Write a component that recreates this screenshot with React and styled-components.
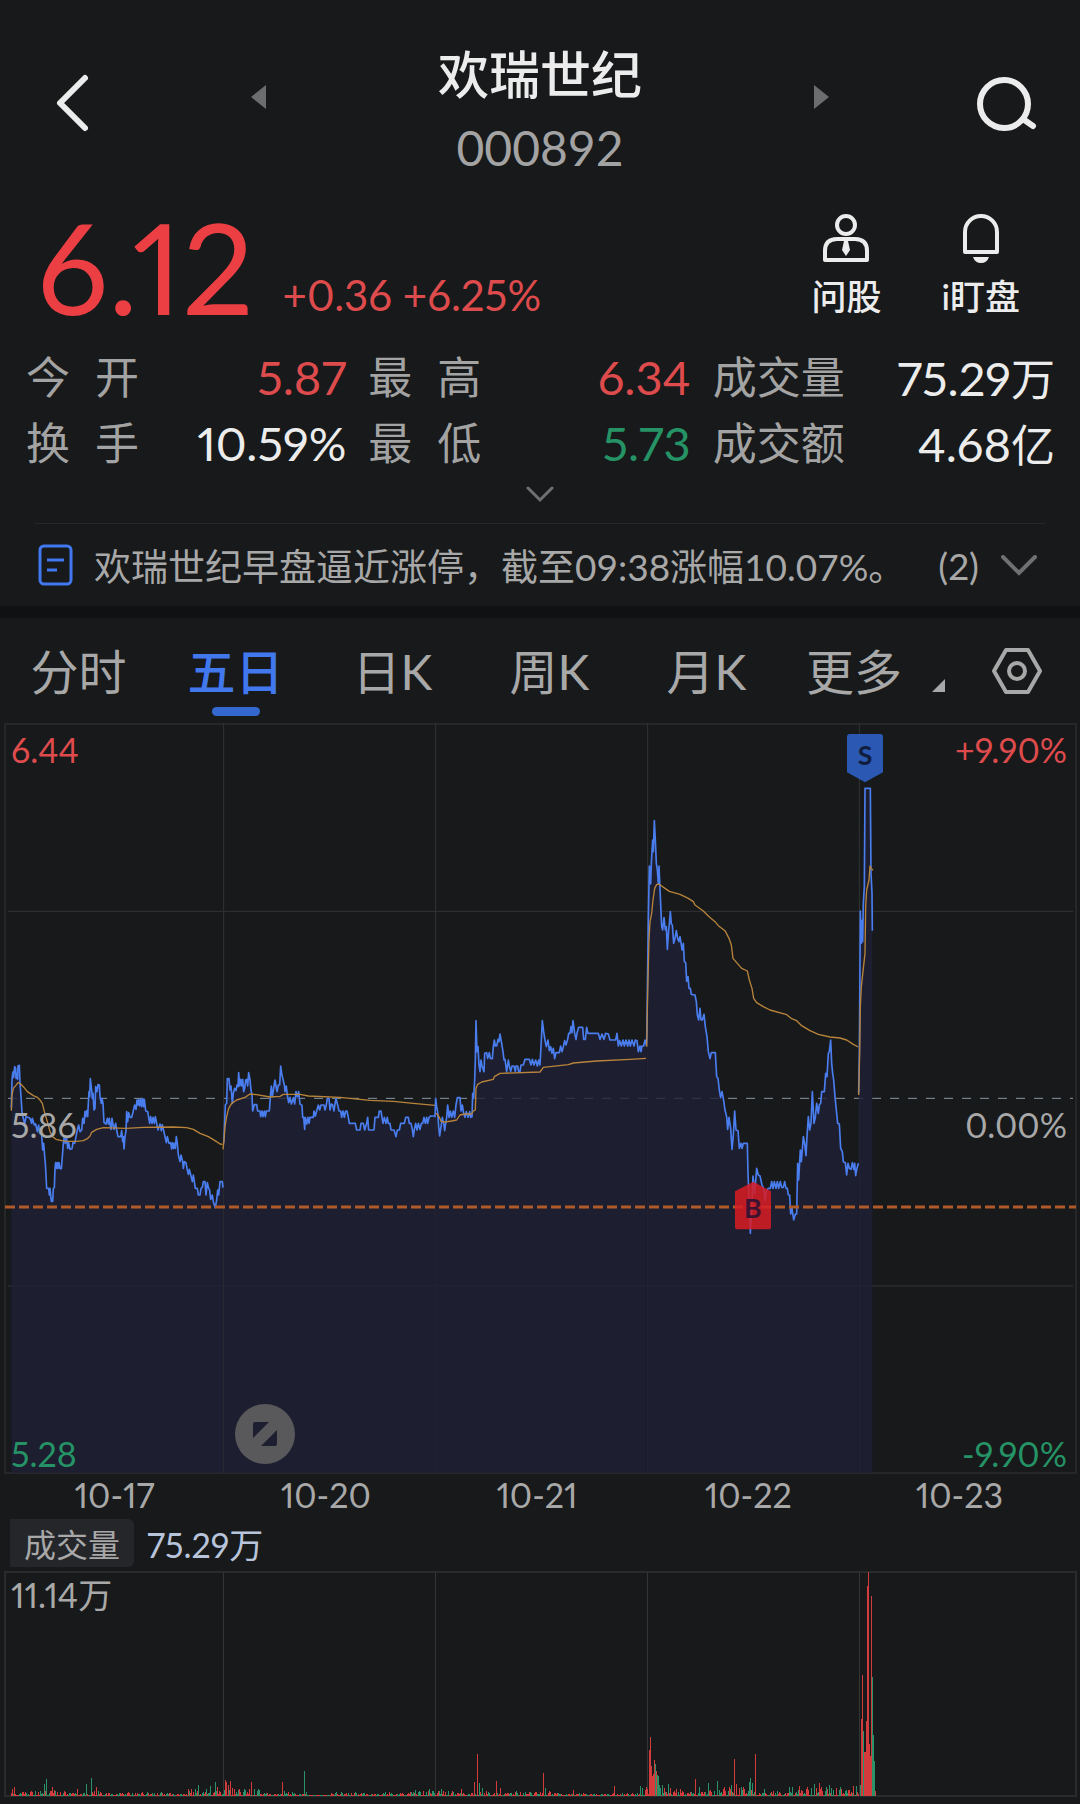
import React, { useState } from "react";
import styled, { createGlobalStyle } from "styled-components";

const RED = "#eb3f44";
const SOFT_RED = "#de4b4d";
const GREEN = "#259365";
const BLUE = "#4278ee";

const GlobalStyle = createGlobalStyle`
  * {
    box-sizing: border-box;
  }
  body {
    margin: 0;
    background: #17191a;
    color: #ececec;
    font-family: Lato, "Noto Sans CJK SC", sans-serif;
    font-feature-settings: "pnum";
  }
  button {
    padding: 0;
    border: none;
    background: none;
    color: inherit;
    font: inherit;
    font-feature-settings: inherit;
    cursor: pointer;
  }
  svg {
    display: block;
  }
`;

const Main = styled.main`
  width: 100%;
  overflow: hidden;
`;

const Header = styled.header`
  display: flex;
  justify-content: space-between;
  align-items: center;
  padding: 25px 42px 0;
`;

const IconButton = styled.button`
  width: 66px;
  height: 62px;
`;

const StockNav = styled.div`
  display: flex;
  justify-content: space-between;
  align-items: center;
  width: 58%;
`;

const ArrowButton = styled.button`
  width: 15px;
  margin-bottom: 14px;
`;

const TitleBlock = styled.div`
  padding-top: 12px;
  text-align: center;
`;

const StockName = styled.h1`
  margin: 0;
  font-size: 51px;
  font-weight: 500;
  line-height: 76px;
`;

const StockCode = styled.div`
  color: #a3a3a3;
  font-size: 48px;
  font-feature-settings: "tnum";
  line-height: 70px;
`;

const PriceSection = styled.section`
  display: flex;
  justify-content: space-between;
  align-items: flex-start;
  padding: 24px 60px 0 37px;
`;

const PriceGroup = styled.div`
  display: flex;
  align-items: flex-end;
  gap: 29px;
`;

const Price = styled.div`
  color: ${RED};
  font-size: 126px;
  line-height: 120px;
`;

const Change = styled.div`
  color: ${SOFT_RED};
  font-size: 42px;
  line-height: 64px;
`;

const Tools = styled.div`
  display: flex;
  gap: 60px;
  padding-top: 7px;
`;

const ToolButton = styled.button`
  display: flex;
  flex-direction: column;
  align-items: center;
  gap: 10px;
  font-size: 35px;
  font-weight: 500;
  line-height: 44px;
`;

const StatGrid = styled.dl`
  display: grid;
  grid-template-columns: 320fr 322fr 342fr;
  column-gap: 22px;
  margin: 17px 25px 0 26px;
`;

const Stat = styled.div`
  display: flex;
  justify-content: space-between;
  align-items: center;
  height: 66px;
`;

const StatLabel = styled.dt`
  display: flex;
  gap: ${(props) => (props.$spread ? "25px" : "0")};
  padding-bottom: 5px;
  color: #a3a3a3;
  font-size: 44px;
`;

const StatValue = styled.dd`
  margin: 0;
  color: ${(props) => props.$color || "#ececec"};
  font-size: 47px;
`;

const Unit = styled.span`
  font-size: 44px;
`;

const ExpandButton = styled.button`
  display: flex;
  justify-content: center;
  align-items: center;
  width: 100%;
  height: 47px;
  padding-bottom: 11px;
`;

const News = styled.section`
  display: flex;
  align-items: center;
  height: 83px;
  margin: 0 35px;
  border-top: 1px solid #26282a;
  color: #a8a8a8;
  font-size: 37px;
`;

const NewsLink = styled.a`
  display: flex;
  flex: 1;
  align-items: center;
  gap: 21px;
  padding-left: 2px;
  color: inherit;
  font-feature-settings: "tnum";
  text-decoration: none;
  white-space: nowrap;
`;

const NewsMore = styled.button`
  display: flex;
  align-items: center;
  gap: 22px;
  padding-right: 8px;
`;

const Band = styled.div`
  height: 12px;
  background: #101113;
`;

const TabBar = styled.nav`
  display: grid;
  grid-template-columns: repeat(5, 157fr) 295fr;
  height: 102px;
  padding-top: 19px;
  color: #a8a8a8;
  font-size: 48px;
  line-height: 70px;
`;

const Tab = styled.button`
  display: flex;
  flex-direction: column;
  align-items: center;
  color: ${(props) => (props.$active ? BLUE : "inherit")};
  font-weight: ${(props) => (props.$active ? 500 : 400)};

  &::after {
    content: "";
    width: 48px;
    height: 9px;
    border-radius: 5px;
    background: ${(props) => (props.$active ? "#3268cf" : "transparent")};
  }
`;

const TabExtras = styled.div`
  display: flex;
  justify-content: space-between;
  align-items: flex-start;
  padding: 0 37px 0 21px;
`;

const MoreButton = styled.button`
  display: flex;
  align-items: flex-end;
  gap: 30px;

  svg {
    margin-bottom: 15px;
  }
`;

const SettingsButton = styled.button`
  padding-top: 9px;
`;

const ChartPanel = styled.section`
  position: relative;

  > svg {
    width: 100%;
    height: auto;
  }
`;

const AxisLabel = styled.span`
  position: absolute;
  color: ${(props) => props.$color || "#a8a8a8"};
  font-size: 34px;
  line-height: 40px;
  ${(props) => (props.$right ? "right: 13px;" : "left: 11px;")}
  top: ${(props) => props.$top};
`;

const FullscreenButton = styled.button`
  position: absolute;
  left: 21.75%;
  bottom: 10px;
  width: 60px;
  height: 60px;
`;

const Dates = styled.div`
  display: grid;
  grid-template-columns: repeat(5, 1fr);
  padding: 0 15px 0 9px;
  color: #a8a8a8;
  font-size: 34px;
  line-height: 42px;
  text-align: center;
`;

const VolumeHead = styled.div`
  display: flex;
  align-items: center;
  gap: 13px;
  height: 54px;
  padding-left: 10px;
  color: #b8c4da;
  font-size: 34px;
`;

const VolumeChip = styled.button`
  height: 48px;
  padding: 0 14px;
  border-radius: 0 6px 6px 0;
  background: #25262a;
  color: #a8a8a8;
  font-size: 32px;
`;

const stats = [
  { label: "今开", value: "5.87", color: SOFT_RED },
  { label: "最高", value: "6.34", color: SOFT_RED },
  { label: "成交量", value: "75.29", unit: "万" },
  { label: "换手", value: "10.59%" },
  { label: "最低", value: "5.73", color: GREEN },
  { label: "成交额", value: "4.68", unit: "亿" },
];

const tabs = ["分时", "五日", "日K", "周K", "月K"];
const dates = ["10-17", "10-20", "10-21", "10-22", "10-23"];

// One entry per trading day: origin of the day, minute prices and average line
const days = [
  {
    x: 0,
    y: 0,
    price:
      "34,1165 36,1080 38,1060 40,1055 41,1072 44,1040 47,1045 48,1075 50,1060 53,1078 54,1038 58,1036 60,1090 63,1130 66,1175 70,1195 74,1212 78,1190 84,1192 90,1195 95,1210 97,1195 103,1215 107,1212 112,1235 116,1215 119,1240 122,1228 125,1245 128,1290 131,1270 134,1308 136,1330 138,1365 140,1405 146,1405 148,1425 150,1405 154,1444 158,1444 160,1405 163,1403 165,1345 167,1328 170,1345 172,1328 174,1345 177,1328 180,1346 184,1346 187,1310 190,1270 193,1250 196,1270 200,1255 203,1285 206,1268 210,1288 216,1286 219,1268 224,1270 228,1250 232,1230 236,1215 240,1235 245,1230 248,1195 252,1210 255,1175 257,1190 260,1172 263,1190 265,1150 267,1115 269,1130 271,1076 275,1110 277,1135 279,1120 282,1170 285,1165 287,1100 291,1115 294,1094 298,1095 300,1130 304,1150 306,1135 309,1150 312,1208 318,1212 322,1195 325,1212 328,1195 330,1212 333,1228 336,1195 339,1215 342,1228 347,1210 350,1230 354,1250 362,1250 365,1232 368,1265 370,1250 372,1287 375,1250 378,1232 380,1175 383,1205 386,1178 390,1192 395,1192 400,1172 404,1155 408,1168 411,1140 414,1155 416,1138 419,1158 422,1138 425,1160 428,1136 431,1160 433,1138 437,1172 443,1175 446,1192 449,1210 452,1190 456,1210 459,1192 463,1210 466,1190 470,1210 474,1230 480,1212 484,1232 487,1214 491,1232 495,1250 499,1268 502,1250 507,1270 512,1268 515,1287 518,1268 521,1285 524,1270 526,1285 529,1250 532,1270 535,1305 540,1325 543,1305 548,1325 550,1345 553,1325 558,1328 561,1345 565,1363 568,1348 573,1368 577,1385 580,1365 583,1385 586,1405 592,1405 595,1425 600,1425 603,1405 607,1402 610,1385 615,1385 618,1425 622,1388 626,1405 629,1410 632,1438 637,1425 640,1445 646,1463 650,1440 653,1410 656,1425 660,1385 667,1385 669,1403",
    average:
      "34,1172 36,1125 40,1105 47,1097 54,1088 60,1090 70,1100 82,1115 100,1127 112,1132 120,1140 127,1150 133,1175 142,1205 150,1235 158,1250 168,1258 185,1262 200,1264 230,1264 250,1262 262,1256 270,1248 275,1237 290,1228 310,1223 380,1225 430,1222 520,1221 560,1223 580,1228 600,1240 625,1250 645,1262 660,1272 668,1273",
  },
  {
    x: 660,
    y: 780,
    price:
      "11,490 13,450 16,375 20,370 22,296 27,296 30,330 33,318 37,370 40,340 44,325 48,332 51,315 54,320 56,278 59,318 62,298 65,318 68,298 71,335 74,325 77,300 80,298 83,318 86,278 90,300 93,330 96,345 98,393 103,374 110,374 113,393 120,393 122,410 126,393 129,410 133,393 136,410 139,393 148,393 151,350 154,318 157,350 161,325 165,300 168,318 171,335 175,315 179,315 182,258 185,280 189,298 193,315 195,335 199,318 202,345 206,368 210,352 214,372 220,353 224,372 228,335 232,350 236,335 240,372 246,376 248,412 251,412 254,448 256,412 260,432 264,412 267,430 270,412 280,412 282,393 286,408 290,393 295,375 299,390 303,375 312,375 315,390 319,375 322,355 327,355 330,390 334,372 338,375 342,393 345,372 348,355 353,375 357,393 362,393 365,412 369,393 373,412 377,393 381,393 385,412 388,430 406,430 410,450 420,450 423,430 430,430 434,450 440,430 443,412 446,450 462,450 465,412 475,412 478,393 483,393 486,412 489,430 493,412 498,430 502,412 505,430 510,430 513,450 522,450 528,470 532,450 538,450 542,430 553,430 557,412 565,412 568,430 573,430 577,448 580,470 583,448 587,430 591,450 595,430 600,448 604,430 608,430 612,412 616,430 620,412 623,430 627,412 632,408 645,408",
    average:
      "9,508 12,480 15,440 20,410 26,385 35,370 50,360 75,352 90,342 110,344 150,351 180,349 190,343 240,343 265,348 360,352 450,361 520,364 580,370 645,376",
  },
  {
    x: 1290,
    y: 780,
    price:
      "15,412 17,355 20,380 23,395 26,440 29,468 33,440 37,412 41,430 44,452 47,430 50,412 53,375 57,412 61,393 65,412 70,393 74,412 78,375 82,353 90,353 93,393 97,375 101,400 105,412 109,395 114,412 119,395 122,412 126,410 128,340 131,355 134,300 136,240 138,122 141,215 144,200 147,255 150,275 153,240 156,258 162,275 164,220 170,218 173,235 178,218 181,235 187,236 190,200 193,180 196,198 200,198 204,178 207,185 210,162 215,190 219,215 222,240 225,238 230,275 235,240 238,258 242,275 246,258 252,258 256,275 258,258 263,258 266,275 270,275 273,255 280,255 285,238 298,238 303,255 307,238 312,255 317,240 322,258 326,240 330,255 334,180 337,122 341,155 345,180 349,200 354,180 358,212 362,200 366,220 370,205 374,236 378,218 388,218 392,198 396,215 400,200 404,182 408,195 413,178 416,160 420,160 423,140 426,158 429,122 434,160 438,178 441,160 446,142 458,142 461,178 466,178 470,142 474,160 505,160 510,178 516,162 522,178 527,160 535,162 540,180 557,180 561,160 565,198 569,182 574,198 579,180 583,198 588,180 593,198 597,180 601,198 606,180 612,198 616,180 621,182 625,215 630,198 633,215 636,198 641,198 645,180 650,198",
    average:
      "17,400 23,403 28,412 33,424 45,426 65,423 80,420 90,405 105,402 125,402 130,393 136,390 138,325 143,313 155,306 190,298 193,290 210,280 330,276 340,262 415,254 430,249 500,243 600,238 648,235",
  },
  {
    x: 1890,
    y: 180,
    price:
      "50,790 53,560 55,420 58,258 62,312 64,250 68,180 70,215 73,122 76,180 79,250 82,270 85,310 87,258 91,350 95,440 98,450 102,413 106,450 109,440 112,508 116,450 118,432 121,395 124,432 127,435 131,490 135,475 139,452 143,475 147,485 150,470 153,488 156,510 160,490 163,545 167,548 170,604 174,590 177,625 181,625 184,643 195,645 199,665 202,705 206,720 210,685 213,720 217,720 222,703 226,740 231,770 235,815 240,836 244,818 256,818 260,890 264,895 268,930 272,953 276,935 280,955 285,990 290,1010 293,1048 297,1012 302,1045 306,1108 310,1065 314,993 318,1050 324,1052 328,1105 333,1090 336,1105 340,1090 352,1090 354,1180 357,1250 361,1360 365,1290 369,1188 374,1240 380,1165 385,1185 390,1188 396,1215 401,1225 405,1262 410,1230 415,1225 421,1225 425,1205 429,1225 433,1205 438,1225 442,1205 446,1225 451,1205 455,1222 460,1222 464,1205 468,1225 472,1225 475,1245 479,1245 482,1302 486,1285 491,1320 496,1302 500,1302 503,1150 506,1200 511,1110 514,1145 520,1070 524,1090 528,1127 531,1070 535,1010 539,1050 543,1030 547,935 552,1030 556,1012 560,970 565,1000 568,975 572,970 575,935 583,935 587,880 591,890 595,820 598,815 602,780 605,850 608,880 611,900 615,950 619,990 623,1030 628,1032 632,1105 637,1115 640,1145 646,1148 650,1185 654,1150 658,1165 663,1168 667,1148 671,1168 674,1150 677,1187 681,1165 685,1150",
    average:
      "50,800 53,640 57,480 60,425 65,400 69,360 74,325 80,313 88,313 95,318 105,325 118,334 150,343 175,355 190,365 195,375 220,393 235,408 255,425 265,437 285,452 297,475 304,495 309,535 320,548 335,565 352,573 358,600 366,625 371,655 380,668 400,680 420,690 470,704 485,716 500,722 515,737 540,752 565,763 600,771 630,774 650,780 670,793 685,801",
  },
  {
    x: 2400,
    y: 0,
    price:
      "176,1120 178,1000 179,880 181,573 184,670 187,600 188,665 190,550 193,500 195,205 211,205 213,460 216,520 217,632",
    average:
      "176,1125 179,1000 181,860 184,800 190,745 195,700 197,560 200,510 207,480 210,438 214,445 219,451",
  },
];

const CHART_BOTTOM = 2259;

const areaPoints = (day) => {
  const points = day.price.split(" ");
  const first = points[0].split(",")[0];
  const last = points[points.length - 1].split(",")[0];
  const bottom = CHART_BOTTOM - day.y;
  return `${first},${bottom} ${day.price} ${last},${bottom}`;
};

// [x, height, rising]
const peaks = [
  [12, 7, 1], [14, 9, 1], [44, 12, 0], [46, 17, 0], [52, 9, 1], [54, 6, 1],
  [77, 7, 1], [86, 12, 0], [91, 18, 0], [96, 9, 1], [188, 7, 1], [198, 11, 0],
  [206, 7, 0], [210, 10, 0], [215, 14, 0], [217, 9, 1], [225, 16, 1],
  [226, 14, 1], [228, 11, 1], [230, 15, 1], [232, 8, 1], [251, 14, 1],
  [254, 7, 0], [282, 14, 1], [284, 5, 0], [304, 25, 0], [306, 4, 0],
  [415, 6, 0], [429, 7, 0], [441, 7, 0], [461, 7, 1], [474, 14, 1],
  [477, 42, 1], [479, 13, 0], [482, 8, 0], [496, 15, 1], [500, 8, 1],
  [543, 23, 1], [545, 8, 0], [573, 6, 1], [614, 10, 1], [640, 10, 0],
  [649, 46, 1], [650, 59, 1], [651, 30, 1], [652, 20, 1], [653, 22, 1],
  [654, 36, 1], [655, 32, 0], [656, 25, 1], [657, 21, 0], [658, 20, 0],
  [659, 11, 0], [660, 8, 0], [662, 11, 0], [664, 8, 1], [668, 12, 0],
  [670, 8, 1], [695, 17, 1], [699, 9, 0], [708, 13, 0], [717, 15, 0],
  [731, 11, 0], [734, 37, 1], [736, 12, 1], [741, 9, 0], [749, 14, 0],
  [750, 18, 0], [752, 13, 0], [755, 42, 1], [764, 7, 0], [789, 9, 0],
  [792, 9, 0], [799, 10, 1], [814, 12, 0], [819, 13, 1], [829, 11, 0],
  [853, 10, 1], [856, 10, 0], [860, 11, 0], [861, 77, 1], [862, 121, 1],
  [863, 65, 0], [864, 44, 1], [865, 44, 1], [866, 75, 1], [867, 210, 1],
  [868, 224, 1], [869, 52, 1], [870, 40, 1], [871, 200, 1], [872, 119, 0],
  [873, 61, 0], [874, 35, 0], [875, 5, 1],
];

// [until x, usual height]
const activity = [
  [60, 5], [110, 4], [185, 3], [222, 7], [262, 7], [310, 3], [330, 0],
  [400, 3], [450, 5], [510, 4], [560, 4], [640, 2], [660, 9], [720, 6],
  [760, 9], [790, 4], [859, 9],
];

const quietBars = [];
for (let x = 11; x < 859; x += 1) {
  const level = activity.find((item) => x < item[0])[1];
  const noise = ((x * 7919 + x * x * 31) % 97) / 97;
  quietBars.push([x, 1 + Math.round(level * noise * noise), (x * 13) % 7 > 2]);
}
const bars = [...quietBars, ...peaks];

const Chevron = ({ width, height, stroke }) => (
  <svg width={width} height={height} viewBox={`0 0 ${width} ${height}`}>
    <path
      d={`M2 2 L${width / 2} ${height - 3} L${width - 2} 2`}
      fill="none"
      stroke="#6f7072"
      strokeWidth={stroke}
      strokeLinecap="round"
    />
  </svg>
);

const PriceChart = () => (
  <svg viewBox="0 0 3240 2262" role="img" aria-label="五日">
    <g fill="none" stroke="#323436" strokeWidth="3">
      <rect x="15" y="12" width="3213" height="2247" stroke="#292b2d" strokeWidth="5" />
      <path d="M24 574H3219M24 1698H3219M671 12V2259M1307 12V2259M1943 12V2259M2578 12V2259" />
      <path d="M24 1135H3219" stroke="#8896a3" strokeDasharray="27 27" strokeDashoffset="-0" />
    </g>
    {days.map((day) => (
      <polygon
        key={day.x}
        transform={`translate(${day.x} ${day.y})`}
        points={areaPoints(day)}
        fill="#1f1f35"
        fillOpacity="0.8"
      />
    ))}
    {days.map((day) => (
      <g
        key={day.x}
        transform={`translate(${day.x} ${day.y})`}
        fill="none"
        strokeLinejoin="round"
      >
        <polyline points={day.price} stroke="#4a7dee" strokeWidth="5" />
        <polyline points={day.average} stroke="#b8843c" strokeWidth="4" />
      </g>
    ))}
    <path d="M15 1461H3228" stroke="#b05a2a" strokeWidth="9" strokeDasharray="30 12" />
    <path d="M2205 1414 L2260 1385 L2313 1414 V1520 Q2313 1528 2305 1528 H2213 Q2205 1528 2205 1520Z" fill="#d71c24" fillOpacity="0.86" />
    <path d="M2541 50 Q2541 42 2549 42 H2641 Q2649 42 2649 50 V157 L2595 187 L2541 157Z" fill="#2c5cbb" fillOpacity="0.95" />
    <g fontSize="80" fontWeight="700" textAnchor="middle">
      <text x="2258" y="1494" fill="#3b1330">B</text>
      <text x="2595" y="136" fill="#111d3c">S</text>
    </g>
  </svg>
);

const VolumeChart = () => (
  <svg viewBox="0 0 1080 234" role="img" aria-label="成交量">
    <g fill="none" stroke="#323436">
      <rect x="5" y="2" width="1071" height="224" stroke="#292b2d" strokeWidth="2" />
      <path d="M223.5 2V226M435.5 2V226M647.5 2V226M859.5 2V226" />
    </g>
    {bars.map(([x, height, rising], i) => (
      <rect
        key={i}
        x={x}
        y={226 - height}
        width="1"
        height={height}
        fill={rising ? "#d33b3d" : "#2a9168"}
      />
    ))}
  </svg>
);

const App = () => {
  const [tab, setTab] = useState("五日");

  return (
    <Main>
      <GlobalStyle />
      <Header>
        <IconButton aria-label="返回">
          <svg width="66" height="62" viewBox="0 0 66 62">
            <path
              d="M43 5 L18 30 L43 55"
              fill="none"
              stroke="#ececec"
              strokeWidth="6"
              strokeLinecap="round"
              strokeLinejoin="round"
            />
          </svg>
        </IconButton>
        <StockNav>
          <ArrowButton aria-label="上一只">
            <svg width="15" height="24" viewBox="0 0 15 24">
              <path d="M15 0V24L0 12Z" fill="#6c6d6e" />
            </svg>
          </ArrowButton>
          <TitleBlock>
            <StockName>欢瑞世纪</StockName>
            <StockCode>000892</StockCode>
          </TitleBlock>
          <ArrowButton aria-label="下一只">
            <svg width="15" height="24" viewBox="0 0 15 24">
              <path d="M0 0V24L15 12Z" fill="#6c6d6e" />
            </svg>
          </ArrowButton>
        </StockNav>
        <IconButton aria-label="搜索">
          <svg width="66" height="62" viewBox="0 0 66 62">
            <g fill="none" stroke="#ececec" strokeWidth="6">
              <circle cx="32" cy="31" r="24" />
              <path d="M51 46 L61 53" strokeLinecap="round" />
            </g>
          </svg>
        </IconButton>
      </Header>

      <PriceSection>
        <PriceGroup>
          <Price>6.12</Price>
          <Change>+0.36 +6.25%</Change>
        </PriceGroup>
        <Tools>
          <ToolButton>
            <svg width="46" height="50" viewBox="0 0 46 50">
              <g fill="none" stroke="#ececec" strokeWidth="4">
                <circle cx="23" cy="11" r="9" />
                <path d="M2 46V37Q2 25 14 25H32Q44 25 44 37V46Z" strokeLinejoin="round" />
              </g>
              <path d="M21 27H25L27 36L23 42L19 36Z" fill="#ececec" />
            </svg>
            问股
          </ToolButton>
          <ToolButton>
            <svg width="36" height="50" viewBox="0 0 36 50">
              <path
                d="M2 38V18A16 16 0 0 1 34 18V38Z"
                fill="none"
                stroke="#ececec"
                strokeWidth="4"
                strokeLinejoin="round"
              />
              <path d="M10 43H26Q24 49 18 49Q12 49 10 43Z" fill="#ececec" />
            </svg>
            i盯盘
          </ToolButton>
        </Tools>
      </PriceSection>

      <StatGrid>
        {stats.map((stat) => (
          <Stat key={stat.label}>
            <StatLabel $spread={stat.label.length === 2}>
              {stat.label.split("").map((char) => (
                <span key={char}>{char}</span>
              ))}
            </StatLabel>
            <StatValue $color={stat.color}>
              {stat.value}
              {stat.unit && <Unit>{stat.unit}</Unit>}
            </StatValue>
          </Stat>
        ))}
      </StatGrid>

      <ExpandButton aria-label="展开">
        <Chevron width={28} height={17} stroke={3} />
      </ExpandButton>

      <News>
        <NewsLink href="#news">
          <svg width="36" height="42" viewBox="0 0 36 42">
            <g fill="none" stroke={BLUE} strokeWidth="3">
              <rect x="3" y="2" width="31" height="38" rx="4" />
              <path d="M10 16H27M10 26H20" />
            </g>
          </svg>
          欢瑞世纪早盘逼近涨停，截至09:38涨幅10.07%。
        </NewsLink>
        <NewsMore>
          (2)
          <Chevron width={36} height={21} stroke={4} />
        </NewsMore>
      </News>

      <Band />

      <TabBar>
        {tabs.map((name) => (
          <Tab key={name} $active={tab === name} onClick={() => setTab(name)}>
            {name}
          </Tab>
        ))}
        <TabExtras>
          <MoreButton>
            更多
            <svg width="13" height="13" viewBox="0 0 13 13">
              <path d="M13 0V13H0Z" fill="#a8a8a8" />
            </svg>
          </MoreButton>
          <SettingsButton aria-label="设置">
            <svg width="52" height="50" viewBox="0 0 52 50">
              <g fill="none" stroke="#a8a8a8" strokeWidth="4" strokeLinejoin="round">
                <path d="M15 4H37L49 25L37 46H15L3 25Z" />
                <circle cx="26" cy="25" r="8" />
              </g>
            </svg>
          </SettingsButton>
        </TabExtras>
      </TabBar>

      <ChartPanel>
        <PriceChart />
        <AxisLabel $top="10px" $color={SOFT_RED}>6.44</AxisLabel>
        <AxisLabel $top="10px" $color={SOFT_RED} $right>+9.90%</AxisLabel>
        <AxisLabel $top="51%">5.86</AxisLabel>
        <AxisLabel $top="51%" $right>0.00%</AxisLabel>
        <AxisLabel $top="calc(100% - 40px)" $color={GREEN}>5.28</AxisLabel>
        <AxisLabel $top="calc(100% - 40px)" $color={GREEN} $right>-9.90%</AxisLabel>
        <FullscreenButton aria-label="全屏">
          <svg width="60" height="60" viewBox="0 0 60 60">
            <circle cx="30" cy="30" r="30" fill="#59595c" />
            <path d="M20 18H34L18 34V20Q18 18 20 18ZM42 26V40Q42 42 40 42H26Z" fill="#1e1e31" />
          </svg>
        </FullscreenButton>
      </ChartPanel>

      <Dates>
        {dates.map((date) => (
          <span key={date}>{date}</span>
        ))}
      </Dates>

      <VolumeHead>
        <VolumeChip>成交量</VolumeChip>
        <span>75.29万</span>
      </VolumeHead>

      <ChartPanel>
        <VolumeChart />
        <AxisLabel $top="5px">11.14万</AxisLabel>
      </ChartPanel>
    </Main>
  );
};

export default App;
